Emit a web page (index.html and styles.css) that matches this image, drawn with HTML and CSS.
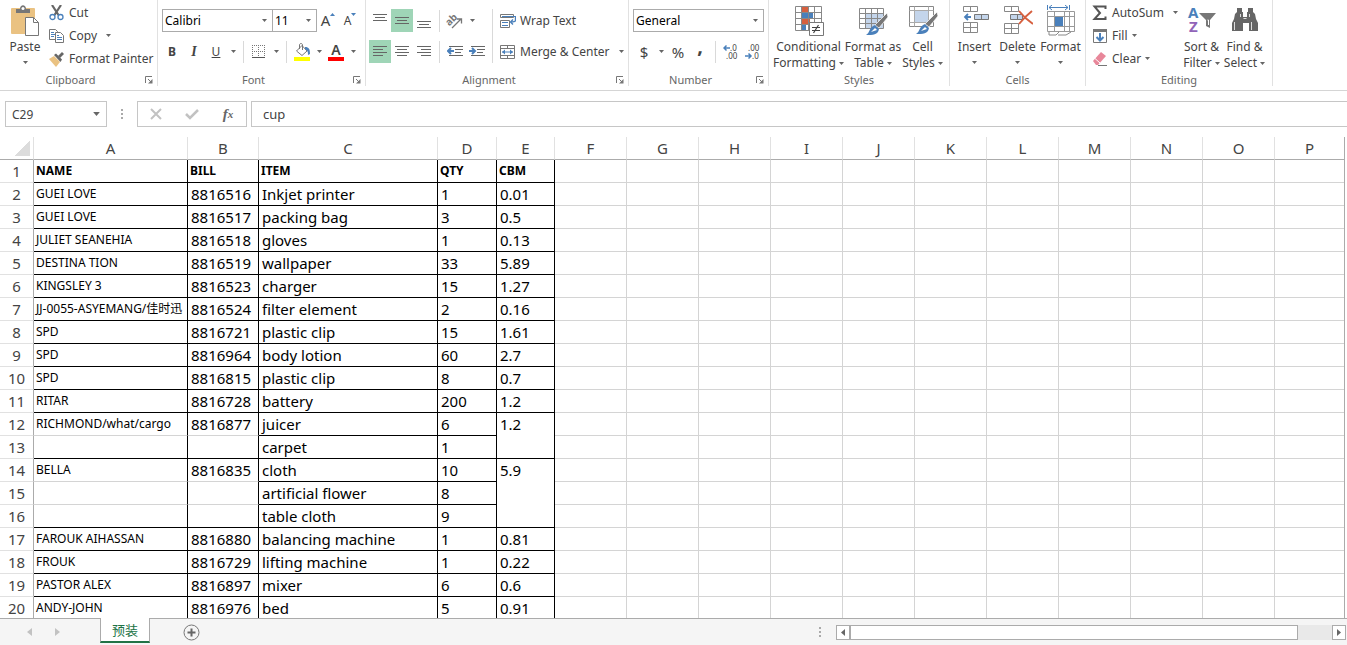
FILE: index.html
```html
<!DOCTYPE html>
<html lang="en">
<head>
<meta charset="utf-8">
<title>Spreadsheet</title>
<link rel="stylesheet" href="styles.css">
</head>
<body>
<svg class="defs" aria-hidden="true">
  <symbol id="caret" viewBox="0 0 5 3"><path d="M0 0h5L2.500 3z" fill="#666"/></symbol>
  <symbol id="launch" viewBox="0 0 8 8"><path d="M.5 7V.5H7M3 3l3 3" fill="none" stroke="#777"/><path d="M7.500 3v4.500H3z" fill="#777"/></symbol>
</svg>

<header class="ribbon">
  <section class="group clipboard">
    <div class="tools">
      <button class="big paste">
        <svg width="30" height="32" viewBox="0 0 30 32"><rect x="1" y="3" width="24" height="26" rx="1" fill="#eac282"/><path d="M6 8V4h4c0-5 6-5 6 0h4v4z" fill="#777"/><circle cx="13" cy="3.500" r="1.500" fill="#fff"/><path d="M15.500 12.500h8l5 5v13h-13z" fill="#fff" stroke="#777"/><path d="M23.500 12.500v5h5" fill="none" stroke="#777"/></svg>
        <span>Paste</span><svg class="caret"><use href="#caret"/></svg>
      </button>
      <div class="stack">
        <button class="line"><svg width="16" height="16" viewBox="0 0 16 16"><path d="M3 0l6.500 10M12 0L5.500 10" stroke="#666" stroke-width="2.200"/><circle cx="3.500" cy="12" r="2.500" fill="#fff" stroke="#4a80bb" stroke-width="1.300"/><circle cx="11.500" cy="12" r="2.500" fill="#fff" stroke="#4a80bb" stroke-width="1.300"/></svg>Cut</button>
        <button class="line"><svg width="16" height="16" viewBox="0 0 16 16"><path d="M.5 1.500h6l2 2v8h-8z" fill="#fff" stroke="#777"/><path d="M2 4.500h3M2 6.500h4M2 8.500h3" stroke="#4a80bb"/><path d="M6.500 4.500h5l3 3v7h-8z" fill="#fff" stroke="#777"/><path d="M8 7.500h2M8 9.500h5M8 11.500h5" stroke="#4a80bb"/></svg>Copy<svg class="caret gap"><use href="#caret"/></svg></button>
        <button class="line"><svg width="16" height="16" viewBox="0 0 16 16"><path d="M0 8l5-3 6 6-4 5z" fill="#eac282"/><path d="M5 4l2-1.500 6 6L11.500 11z" fill="#666"/><path d="M9 5l4-4 2 2-4 4" fill="#666"/></svg>Format Painter</button>
      </div>
    </div>
    <footer><h2>Clipboard</h2><button class="launch" aria-label="Clipboard settings"><svg><use href="#launch"/></svg></button></footer>
  </section>

  <section class="group font">
    <div class="rows">
      <div class="row">
        <label class="combo family"><select aria-label="Font"><option>Calibri</option></select><svg class="caret"><use href="#caret"/></svg></label>
        <label class="combo size"><select aria-label="Font size"><option>11</option></select><svg class="caret"><use href="#caret"/></svg></label>
        <button class="ib grow" aria-label="Increase font size">A<svg width="5" height="3" viewBox="0 0 5 3"><path d="M0 3h5L2.500 0z" fill="#4a80bb"/></svg></button>
        <button class="ib shrink" aria-label="Decrease font size">A<svg width="5" height="3" viewBox="0 0 5 3"><path d="M0 0h5L2.500 3z" fill="#4a80bb"/></svg></button>
      </div>
      <div class="row">
        <button class="ib"><b>B</b></button><button class="ib"><i>I</i></button><button class="ib"><u>U</u></button><button class="cb" aria-label="Underline styles"><svg class="caret"><use href="#caret"/></svg></button>
        <span class="sep"></span>
        <button class="ib" aria-label="Borders"><svg width="14" height="14" viewBox="0 0 14 14"><path d="M0 .5h13M0 6.500h13M.5 0v12M6.500 0v12M12.500 0v12" stroke="#777" stroke-dasharray="1 1"/><path d="M0 12.500h13" stroke="#555"/></svg></button><button class="cb" aria-label="Border styles"><svg class="caret"><use href="#caret"/></svg></button>
        <span class="sep"></span>
        <button class="ib" aria-label="Fill colour"><svg width="16" height="18" viewBox="0 0 16 18"><path d="M2.500 8L8 2.500l5 5.500-5 4.500z" fill="#fff" stroke="#777"/><path d="M5.500 6V2c0-2 3-2 3 0v5" fill="none" stroke="#777"/><path d="M11 4c4 0 5 2 5 7l-2 1c0-3 0-4-3-6z" fill="#4a80bb"/><path d="M0 14h16v4H0z" fill="#ff0"/></svg></button><button class="cb" aria-label="Fill colours"><svg class="caret"><use href="#caret"/></svg></button>
        <button class="ib colour" aria-label="Font colour">A</button><button class="cb" aria-label="Font colours"><svg class="caret"><use href="#caret"/></svg></button>
      </div>
    </div>
    <footer><h2>Font</h2><button class="launch" aria-label="Font settings"><svg><use href="#launch"/></svg></button></footer>
  </section>

  <section class="group alignment">
    <div class="tools">
      <div class="rows">
        <div class="row">
          <button class="ib" aria-label="Top align"><svg width="14" height="14" viewBox="0 0 14 14"><path d="M0 .5h14M2 3.500h10M0 6.500h14" stroke="#666"/></svg></button>
          <button class="ib on" aria-label="Middle align"><svg width="14" height="14" viewBox="0 0 14 14"><path d="M0 3.500h14M2 6.500h10M0 9.500h14" stroke="#666"/></svg></button>
          <button class="ib" aria-label="Bottom align"><svg width="14" height="14" viewBox="0 0 14 14"><path d="M0 7.500h14M2 10.500h10M0 13.500h14" stroke="#666"/></svg></button>
          <span class="sep"></span>
          <button class="ib" aria-label="Orientation"><svg width="18" height="18" viewBox="0 0 18 18"><text class="ab" x="-6" y="7" transform="rotate(-45 6 6) translate(4 3)">ab</text><path d="M6 16l9-9M11 7h4.500v4.500" fill="none" stroke="#777" stroke-width="1.300"/></svg></button><button class="cb" aria-label="Orientations"><svg class="caret"><use href="#caret"/></svg></button>
        </div>
        <div class="row">
          <button class="ib on" aria-label="Align left"><svg width="14" height="12" viewBox="0 0 14 12"><path d="M0 .5h14M0 3.500h10M0 6.500h14M0 9.500h10" stroke="#666"/></svg></button>
          <button class="ib" aria-label="Centre"><svg width="14" height="12" viewBox="0 0 14 12"><path d="M0 .5h14M2 3.500h10M0 6.500h14M2 9.500h10" stroke="#666"/></svg></button>
          <button class="ib" aria-label="Align right"><svg width="14" height="12" viewBox="0 0 14 12"><path d="M0 .5h14M4 3.500h10M0 6.500h14M4 9.500h10" stroke="#666"/></svg></button>
          <span class="sep"></span>
          <button class="ib" aria-label="Decrease indent"><svg width="16" height="12" viewBox="0 0 16 12"><path d="M2 .5h14M8 3.500h8M8 6.500h6M2 9.500h14" stroke="#666"/><path d="M7 5H1M4 2L1 5l3 3" fill="none" stroke="#4a80bb" stroke-width="2"/></svg></button>
          <button class="ib" aria-label="Increase indent"><svg width="16" height="12" viewBox="0 0 16 12"><path d="M2 .5h14M8 3.500h8M8 6.500h6M2 9.500h14" stroke="#666"/><path d="M0 5h6M3 2l3 3-3 3" fill="none" stroke="#4a80bb" stroke-width="2"/></svg></button>
        </div>
      </div>
      <span class="sep tall"></span>
      <div class="rows">
        <button class="line"><svg width="16" height="16" viewBox="0 0 16 16"><path d="M.5 1.500h13v3H.5zM.5 7.500h9v7H.5z" fill="#fff" stroke="#777"/><path d="M2 3.500h14M2 9.500h6M2 12.500h6" stroke="#4a80bb"/><path d="M15.500 4v3.500c0 1-1 1.500-4.500 1.500M13 6.500L10.500 9l2.500 2.500" fill="none" stroke="#4a80bb" stroke-width="1.400"/></svg>Wrap Text</button>
        <button class="line"><svg width="16" height="16" viewBox="0 0 16 16"><path d="M.5 1.500h14v13H.5zM.5 4.500h14M.5 11.500h14M7.500 1.500v3M7.500 11.500v3" fill="none" stroke="#777"/><path d="M2 8h11" stroke="#4a80bb"/><path d="M5 5.500v5L2 8zM10 5.500v5L13 8z" fill="#4a80bb"/></svg>Merge &amp; Center<svg class="caret gap"><use href="#caret"/></svg></button>
      </div>
    </div>
    <footer><h2>Alignment</h2><button class="launch" aria-label="Alignment settings"><svg><use href="#launch"/></svg></button></footer>
  </section>

  <section class="group number">
    <div class="rows">
      <div class="row">
        <label class="combo format"><select aria-label="Number format"><option>General</option></select><svg class="caret"><use href="#caret"/></svg></label>
      </div>
      <div class="row">
        <button class="ib sign">$</button><button class="cb" aria-label="Currencies"><svg class="caret"><use href="#caret"/></svg></button><button class="ib sign">%</button><button class="ib comma">,</button>
        <span class="sep"></span>
        <button class="ib" aria-label="Increase decimal"><svg width="16" height="16" viewBox="0 0 16 16"><path d="M7 4H1M3.500 1.500L1 4l2.500 2.500" fill="none" stroke="#4a80bb" stroke-width="1.500"/><text class="dec" x="7" y="7">.0</text><text class="dec" x="3" y="15">.00</text></svg></button>
        <button class="ib" aria-label="Decrease decimal"><svg width="16" height="16" viewBox="0 0 16 16"><path d="M0 12h6M3.500 9.500L6 12l-2.500 2.500" fill="none" stroke="#4a80bb" stroke-width="1.500"/><text class="dec" x="3" y="7">.00</text><text class="dec" x="7" y="15">.0</text></svg></button>
      </div>
    </div>
    <footer><h2>Number</h2><button class="launch" aria-label="Number settings"><svg><use href="#launch"/></svg></button></footer>
  </section>

  <section class="group styles">
    <div class="tools">
      <button class="big conditional">
        <svg width="30" height="32" viewBox="0 0 30 32"><path d="M1.500 1.500h26v24h-26z" fill="#fff"/><path d="M8 2h6v5H8zM8 14h8v5H8z" fill="#d6603f"/><path d="M8 8h11v5H8zM8 20h4v5H8z" fill="#4a80bb"/><path d="M1.500 1.500h26v24h-26zM1.500 7.500h26M1.500 13.500h26M1.500 19.500h26M7.500 1.500v24M14.500 1.500v24M20.500 1.500v24" fill="none" stroke="#888"/><path d="M15.500 17.500h14v13h-14z" fill="#fff" stroke="#777"/><path d="M18 22.500h8M18 25.500h8M24.500 20l-5 8" stroke="#444" stroke-width="1.200"/></svg>
        <span>Conditional</span><span>Formatting<svg class="caret"><use href="#caret"/></svg></span>
      </button>
      <button class="big table-style">
        <svg width="30" height="32" viewBox="0 0 30 32"><path d="M7 8h18v16H7z" fill="#c4d5eb"/><path d="M1.500 3.500h24v20h-24zM1.500 8.500h24M1.500 13.500h24M1.500 18.500h24M7.500 3.500v20M13.500 3.500v20M19.500 3.500v20" fill="none" stroke="#888"/><path d="M29 8l1 4-9 11-4-3z" fill="#777" stroke="#fff" stroke-width=".7"/><path d="M17 20l4 4c-1 6-6 6-13 6 4-2 3-8 9-10z" fill="#4a80bb"/><path d="M13 27l4-4 2 2z" fill="#fff"/></svg>
        <span>Format as</span><span>Table<svg class="caret"><use href="#caret"/></svg></span>
      </button>
      <button class="big">
        <svg width="30" height="32" viewBox="0 0 30 32"><path d="M1.500 1.500h24v20h-24z" fill="#fff" stroke="#888"/><path d="M1.500 5.500h24M1.500 17.500h24M6.500 1.500v20M20.500 1.500v20" stroke="#aaa"/><path d="M7 6h13v11H7z" fill="#c4d5eb"/><path d="M29 7l1 4-9 11-4-3z" fill="#777" stroke="#fff" stroke-width=".7"/><path d="M17 19l4 4c-1 6-6 6-13 6 4-2 3-8 9-10z" fill="#4a80bb"/><path d="M13 26l4-4 2 2z" fill="#fff"/></svg>
        <span>Cell</span><span>Styles<svg class="caret"><use href="#caret"/></svg></span>
      </button>
    </div>
    <footer><h2>Styles</h2></footer>
  </section>

  <section class="group cells">
    <div class="tools">
      <button class="big">
        <svg width="28" height="32" viewBox="0 0 28 32"><path d="M2.500 1.500h14v5h-14zM9.500 1.500v5M2.500 17.500h14v10h-14zM2.500 22.500h14M9.500 17.500v10" fill="#fff" stroke="#888"/><path d="M13.500 9.500h14v5h-14zM20.500 9.500v5" fill="#c4d5eb" stroke="#777"/><path d="M10 12H4M7 9l-3 3 3 3" fill="none" stroke="#4a80bb" stroke-width="1.800"/></svg>
        <span>Insert</span><svg class="caret"><use href="#caret"/></svg>
      </button>
      <button class="big">
        <svg width="30" height="32" viewBox="0 0 30 32"><path d="M1.500 1.500h14v5h-14zM8.500 1.500v5M1.500 18.500h14v10h-14zM1.500 23.500h14M8.500 18.500v10" fill="#fff" stroke="#888"/><path d="M7.500 9.500h12v5h-12zM14.500 9.500v5" fill="#c4d5eb" stroke="#777"/><path d="M16 6c4 5 8 9 14 13M29 6c-5 4-9 8-13 13" fill="none" stroke="#d6603f" stroke-width="2"/></svg>
        <span>Delete</span><svg class="caret"><use href="#caret"/></svg>
      </button>
      <button class="big">
        <svg width="30" height="32" viewBox="0 0 30 32"><path d="M1.500 6.500h27v20h-27zM1.500 11.500h27M1.500 21.500h27M8.500 6.500v20M18.500 6.500v20M23.500 6.500v20" fill="#fff" stroke="#999"/><path d="M9 12h8v9H9z" fill="#4a80bb"/><path d="M1.500 0v5M23.500 0v5M3 2.500h19M6 0L3 2.500 6 5M19 0l3 2.500L19 5" fill="none" stroke="#4a80bb"/><path d="M3 27v3l7 0 3-3M12 30h8l5-3" fill="none" stroke="#888"/></svg>
        <span>Format</span><svg class="caret"><use href="#caret"/></svg>
      </button>
    </div>
    <footer><h2>Cells</h2></footer>
  </section>

  <section class="group editing">
    <div class="tools">
      <div class="stack">
        <button class="line"><svg width="16" height="16" viewBox="0 0 16 16"><path d="M13.500 4V1.500H2.500L8 8l-5.500 6h11V11.500" fill="none" stroke="#555" stroke-width="2"/></svg>AutoSum<svg class="caret gap"><use href="#caret"/></svg></button>
        <button class="line"><svg width="16" height="16" viewBox="0 0 16 16"><path d="M1.500 1.500h13v13h-13z" fill="#fff" stroke="#777"/><path d="M1 1h14v3H1z" fill="#777"/><path d="M8 5v7M4.500 9L8 12.500 11.500 9" fill="none" stroke="#4a80bb" stroke-width="2"/></svg>Fill<svg class="caret"><use href="#caret"/></svg></button>
        <button class="line"><svg width="16" height="16" viewBox="0 0 16 16"><path d="M1 10L9 1l5 4-8 9H4z" fill="#e8879a"/><path d="M3 7.500l5 4.500" stroke="#fff"/><path d="M6 14.500h9" stroke="#777"/></svg>Clear<svg class="caret"><use href="#caret"/></svg></button>
      </div>
      <button class="big">
        <svg width="30" height="32" viewBox="0 0 30 32"><text class="az a" x="1" y="13">A</text><text class="az z" x="2" y="27">Z</text><path d="M12 8h17l-6 7v8l-4-2v-6z" fill="#777"/><path d="M20.500 15h1v5" fill="none" stroke="#fff"/></svg>
        <span>Sort &amp;</span><span>Filter<svg class="caret"><use href="#caret"/></svg></span>
      </button>
      <button class="big">
        <svg width="28" height="32" viewBox="0 0 28 32"><path d="M6 3h5v4h1v5h4V7h1V3h5v4l2 2 1 5 2 4v8h-9v-8h-6v8H1v-8l2-4 1-5 2-2z" fill="#666"/><path d="M3.500 17v8M9.500 9v3M18.500 9v3M20.500 17v8M12.500 13.500h3" stroke="#ddd"/></svg>
        <span>Find &amp;</span><span>Select<svg class="caret"><use href="#caret"/></svg></span>
      </button>
    </div>
    <footer><h2>Editing</h2></footer>
  </section>
</header>

<div class="formula-bar">
  <label class="namebox"><input aria-label="Name box" value="C29"><svg class="caret"><use href="#caret"/></svg></label>
  <span class="dots"></span>
  <div class="entry">
    <button aria-label="Cancel"><svg width="14" height="14" viewBox="0 0 14 14"><path d="M2 2l10 10M12 2L2 12" stroke="#c2c2c2" stroke-width="2"/></svg></button>
    <button aria-label="Enter"><svg width="14" height="14" viewBox="0 0 14 14"><path d="M1 7l4 4 8-8" fill="none" stroke="#c2c2c2" stroke-width="2.500"/></svg></button>
    <button class="fx" aria-label="Insert function">f<sub>x</sub></button>
  </div>
  <input class="formula" aria-label="Formula" value="cup">
</div>

<main class="sheet">
<table>
<colgroup><col class="c-row"><col class="c-a"><col class="c-b"><col class="c-c"><col class="c-d"><col class="c-e"><col span="10" class="c-std"><col></colgroup>
<thead><tr><th class="corner"></th><th>A</th><th>B</th><th>C</th><th>D</th><th>E</th><th>F</th><th>G</th><th>H</th><th>I</th><th>J</th><th>K</th><th>L</th><th>M</th><th>N</th><th>O</th><th>P</th></tr></thead>
<tbody>
<tr class="titles"><th>1</th><td class="k n">NAME</td><td class="k">BILL</td><td class="k">ITEM</td><td class="k">QTY</td><td class="k">CBM</td><td><td><td><td><td><td><td><td><td><td><td></tr>
<tr><th>2</th><td class="k n">GUEI LOVE</td><td class="k">8816516</td><td class="k">Inkjet printer</td><td class="k">1</td><td class="k">0.01</td><td><td><td><td><td><td><td><td><td><td><td></tr>
<tr><th>3</th><td class="k n">GUEI LOVE</td><td class="k">8816517</td><td class="k">packing bag</td><td class="k">3</td><td class="k">0.5</td><td><td><td><td><td><td><td><td><td><td><td></tr>
<tr><th>4</th><td class="k n">JULIET SEANEHIA</td><td class="k">8816518</td><td class="k">gloves</td><td class="k">1</td><td class="k">0.13</td><td><td><td><td><td><td><td><td><td><td><td></tr>
<tr><th>5</th><td class="k n">DESTINA TION</td><td class="k">8816519</td><td class="k">wallpaper</td><td class="k">33</td><td class="k">5.89</td><td><td><td><td><td><td><td><td><td><td><td></tr>
<tr><th>6</th><td class="k n">KINGSLEY 3</td><td class="k">8816523</td><td class="k">charger</td><td class="k">15</td><td class="k">1.27</td><td><td><td><td><td><td><td><td><td><td><td></tr>
<tr><th>7</th><td class="k n">JJ-0055-ASYEMANG/佳时迅</td><td class="k">8816524</td><td class="k">filter element</td><td class="k">2</td><td class="k">0.16</td><td><td><td><td><td><td><td><td><td><td><td></tr>
<tr><th>8</th><td class="k n">SPD</td><td class="k">8816721</td><td class="k">plastic clip</td><td class="k">15</td><td class="k">1.61</td><td><td><td><td><td><td><td><td><td><td><td></tr>
<tr><th>9</th><td class="k n">SPD</td><td class="k">8816964</td><td class="k">body lotion</td><td class="k">60</td><td class="k">2.7</td><td><td><td><td><td><td><td><td><td><td><td></tr>
<tr><th>10</th><td class="k n">SPD</td><td class="k">8816815</td><td class="k">plastic clip</td><td class="k">8</td><td class="k">0.7</td><td><td><td><td><td><td><td><td><td><td><td></tr>
<tr><th>11</th><td class="k n">RITAR</td><td class="k">8816728</td><td class="k">battery</td><td class="k">200</td><td class="k">1.2</td><td><td><td><td><td><td><td><td><td><td><td></tr>
<tr><th>12</th><td class="k n open">RICHMOND/what/cargo</td><td class="k open">8816877</td><td class="k">juicer</td><td class="k">6</td><td class="k" rowspan="2">1.2</td><td><td><td><td><td><td><td><td><td><td><td></tr>
<tr><th>13</th><td class="k n"></td><td class="k"></td><td class="k">carpet</td><td class="k">1</td><td><td><td><td><td><td><td><td><td><td><td></tr>
<tr><th>14</th><td class="k n open">BELLA</td><td class="k open">8816835</td><td class="k">cloth</td><td class="k">10</td><td class="k" rowspan="3">5.9</td><td><td><td><td><td><td><td><td><td><td><td></tr>
<tr><th>15</th><td class="k n open"></td><td class="k open"></td><td class="k">artificial flower</td><td class="k">8</td><td><td><td><td><td><td><td><td><td><td><td></tr>
<tr><th>16</th><td class="k n"></td><td class="k"></td><td class="k">table cloth</td><td class="k">9</td><td><td><td><td><td><td><td><td><td><td><td></tr>
<tr><th>17</th><td class="k n">FAROUK AIHASSAN</td><td class="k">8816880</td><td class="k">balancing machine</td><td class="k">1</td><td class="k">0.81</td><td><td><td><td><td><td><td><td><td><td><td></tr>
<tr><th>18</th><td class="k n">FROUK</td><td class="k">8816729</td><td class="k">lifting machine</td><td class="k">1</td><td class="k">0.22</td><td><td><td><td><td><td><td><td><td><td><td></tr>
<tr><th>19</th><td class="k n">PASTOR ALEX</td><td class="k">8816897</td><td class="k">mixer</td><td class="k">6</td><td class="k">0.6</td><td><td><td><td><td><td><td><td><td><td><td></tr>
<tr><th>20</th><td class="k n">ANDY-JOHN</td><td class="k">8816976</td><td class="k">bed</td><td class="k">5</td><td class="k">0.91</td><td><td><td><td><td><td><td><td><td><td><td></tr>
</tbody>
</table>
</main>

<nav class="tabs">
  <button class="step" aria-label="Previous sheet"><svg width="5" height="8" viewBox="0 0 5 8"><path d="M5 0v8L0 4z" fill="#c2c2c2"/></svg></button>
  <button class="step" aria-label="Next sheet"><svg width="5" height="8" viewBox="0 0 5 8"><path d="M0 0v8l5-4z" fill="#c2c2c2"/></svg></button>
  <button class="tab">预装</button>
  <button class="add" aria-label="New sheet"><svg width="17" height="17" viewBox="0 0 17 17"><circle cx="8.500" cy="8.500" r="7.500" fill="none" stroke="#777"/><path d="M8.500 4.500v8M4.500 8.500h8" stroke="#666" stroke-width="2"/></svg></button>
  <span class="dots"></span>
  <div class="scroll">
    <button aria-label="Scroll left"><svg width="4" height="7" viewBox="0 0 4 7"><path d="M4 0v7L0 3.500z" fill="#666"/></svg></button>
    <div class="track"><div class="thumb"></div></div>
    <button aria-label="Scroll right"><svg width="4" height="7" viewBox="0 0 4 7"><path d="M0 0v7l4-3.500z" fill="#666"/></svg></button>
  </div>
</nav>
</body>
</html>
```
FILE: styles.css
```css
* { box-sizing: border-box; }
body {
  margin: 0;
  height: 100vh;
  display: flex;
  flex-direction: column;
  overflow: hidden;
  background: #fff;
  color: #444;
  font: 12px/16px "Noto Sans", "Noto Sans CJK SC", sans-serif;
}
button, input, select { font: inherit; color: inherit; }
button { display: flex; align-items: center; border: 0; padding: 0; background: none; white-space: nowrap; }
svg { flex: none; display: block; }
.defs { display: none; }
.caret { width: 5px; height: 3px; }

/* Ribbon */
.ribbon { flex: none; display: flex; border-bottom: 1px solid #d5d5d5; padding-bottom: 4px; }
.group { flex: none; display: flex; flex-direction: column; border-right: 1px solid #e1e1e1; }
.tools { display: flex; height: 74px; }
.clipboard { width: 158px; }
.font { width: 208px; }
.alignment { width: 263px; }
.number { width: 140px; }
.styles { width: 181px; }
.cells { width: 136px; }
.editing { width: 187px; }
.group footer { display: flex; align-items: center; height: 12px; margin-top: auto; }
.group h2 { flex: 1; margin: 0; font-size: 11px; font-weight: 400; line-height: 12px; text-align: center; color: #666; }
.launch { width: 16px; justify-content: center; }
.launch svg { width: 8px; height: 8px; }

.rows { display: flex; flex-direction: column; gap: 8px; height: 74px; padding: 9px 0 0 3px; }
.row { display: flex; align-items: center; height: 23px; }
.rows .line { height: 23px; }
.number .rows, .font .row:first-child { padding-left: 1px; }
.number .rows { padding-left: 4px; }
.stack { display: flex; flex-direction: column; padding-top: 1px; }
.line { height: 23px; gap: 4px; }
.line .caret { margin-left: 0; }
.line .caret.gap { margin-left: 5px; }
.clipboard .tools { padding-left: 1px; }
.editing .tools { padding-left: 6px; }
.editing .stack { width: 88px; }

.big { flex-direction: column; width: 43px; padding-top: 5px; }
.big > svg:first-child { margin-bottom: 2px; }
.big > span { display: flex; align-items: center; gap: 3px; line-height: 16px; }
.big > .caret { margin-top: 6px; }
.paste { width: 48px; }
.styles .tools { padding-left: 3px; }
.conditional { width: 73px; }
.table-style { width: 56px; }
.cells .tools { padding-left: 3px; }

.ib { width: 22px; height: 23px; justify-content: center; }
.on { background: #9fd5b7; }
.cb { width: 12px; height: 23px; justify-content: center; }
.sep { width: 1px; height: 22px; margin: 0 4px; background: #d9d9d9; }
.tall { height: 54px; margin: 9px 0 0 4px; }
.alignment .tools > .rows:last-child { padding-left: 7px; }
.ib i { font-family: "Liberation Serif", serif; font-size: 14px; font-weight: 700; }
.grow { font-size: 15px; align-items: flex-start; line-height: 23px; }
.shrink { font-size: 12px; align-items: flex-start; line-height: 23px; }
.grow svg, .shrink svg { margin-top: 4px; }
.colour { font-size: 14px; font-weight: 600; }
.font .colour { width: 16px; height: 18px; margin: 0 3px; line-height: 14px; border-bottom: 4px solid #f00; }
.sign { font-size: 15px; }
.comma { font-size: 20px; font-weight: 700; line-height: 12px; align-items: flex-start; }
.ab { font: 700 10px "Noto Sans", sans-serif; fill: #777; }
.dec { font: 8px "Noto Sans", sans-serif; fill: #444; }
.az { font: 700 15px "Noto Sans", sans-serif; }
.a { fill: #4a80bb; }
.z { fill: #9164b8; }

.combo { display: grid; align-items: center; height: 23px; border: 1px solid #ababab; color: #000; }
.combo > *, .namebox > * { grid-area: 1 / 1; }
.combo select { appearance: none; width: 100%; height: 21px; border: 0; padding: 0 2px; background: none; }
.combo .caret { justify-self: end; margin-right: 5px; pointer-events: none; }
.family { width: 111px; }
.size { width: 44px; border-left: 0; }
.format { width: 131px; }

/* Formula bar */
.formula-bar { flex: none; display: flex; padding: 10px 0 10px 5px; }
.formula-bar input { min-width: 0; height: 24px; border: 0; padding: 0 6px; background: none; }
.namebox { display: grid; align-items: center; width: 102px; border: 1px solid #c6c6c6; }
.namebox input { width: 100%; }
.namebox .caret { width: 7px; height: 4px; justify-self: end; margin-right: 6px; }
.dots { width: 2px; height: 10px; background: repeating-linear-gradient(#aaa 0 2px, transparent 2px 4px); }
.formula-bar .dots { margin: 8px 14px; }
.entry { display: flex; width: 110px; height: 26px; border: 1px solid #c6c6c6; }
.entry button { flex: 1; justify-content: center; }
.fx { font: italic 700 15px "Liberation Serif", serif; color: #666; }
.fx sub { font-size: 11px; }
.formula-bar .formula { flex: 1; height: 26px; margin-left: 4px; padding: 0 11px; border: 1px solid #c6c6c6; border-right: 0; font-size: 13px; }

/* Grid */
.sheet { flex: 1; min-height: 0; overflow: hidden; }
table { width: calc(100% - 2px); table-layout: fixed; border-collapse: separate; border-spacing: 0; border-right: 1px solid #ababab; }
.c-row { width: 34px; }
.c-a { width: 154px; }
.c-b { width: 71px; }
.c-c { width: 179px; }
.c-d { width: 59px; }
.c-e { width: 58px; }
.c-std { width: 72px; }
th, td { height: 23px; padding: 0; border: 0 solid #d4d4d4; border-width: 0 1px 1px 0; line-height: 22px; white-space: nowrap; overflow: hidden; }
th { font-size: 15px; font-weight: 400; color: #444; }
thead th { border-color: #ababab; border-right-color: #e1e1e1; }
tbody th { border-color: #e1e1e1; border-right-color: #ababab; }
.corner { background: linear-gradient(135deg, transparent 50%, #dcdcdc 50%) 15px 4px / 15px 15px no-repeat; }
td { vertical-align: top; text-align: left; font-size: 15px; color: #000; }
td:last-child, thead th:last-child { border-right: 0; }
.k { border-color: #000; padding-left: 3px; }
.n { padding-left: 2px; font-size: 12px; }
.open { border-bottom-color: #d4d4d4; }
.titles td { font-size: 12px; font-weight: 700; padding-left: 2px; }

/* Sheet tabs */
.tabs { flex: none; display: flex; height: 27px; background: #f5f5f5; border-top: 1px solid #ababab; }
.step { width: 28px; justify-content: center; }
.step:first-child { margin-left: 15px; }
.tab { width: 50px; height: 25px; margin: -1px 0 0 29px; justify-content: center; background: #fff; border: solid #ababab; border-width: 0 1px; border-bottom: 2px solid #217346; color: #217346; font-size: 13px; }
.add { margin-left: 33px; }
.tabs .dots { margin: 8px 15px 0 auto; }
.scroll { display: flex; flex: 0 0 510px; height: 15px; margin: 6px 1px 0 0; background: #e9e9e9; }
.scroll button { width: 14px; justify-content: center; border: 1px solid #ababab; background: #fff; }
.track { flex: 1; display: flex; }
.thumb { width: 93%; border: 1px solid #ababab; background: #fff; }
```
